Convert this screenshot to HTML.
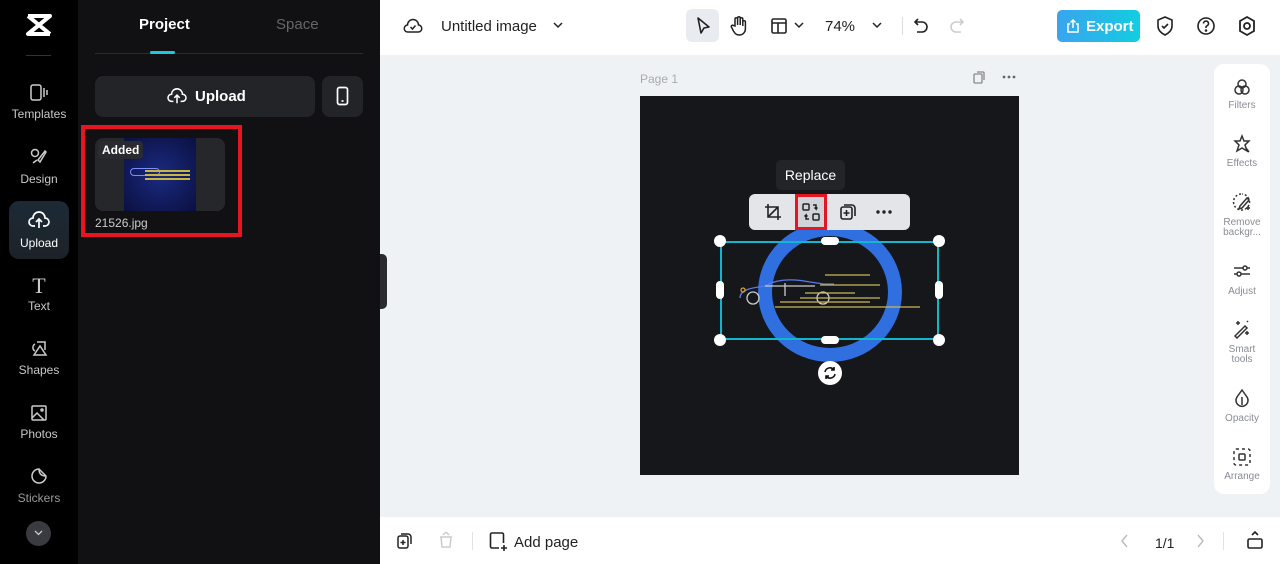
<!DOCTYPE html><html><head><style>
*{margin:0;padding:0;box-sizing:border-box}
body{width:1280px;height:564px;overflow:hidden;font-family:"Liberation Sans",sans-serif;position:relative;background:#eff2f5}
.a{position:absolute}
.nav{color:#c8c8cc;font-size:12px;text-align:center;width:78px;left:0}
svg{display:block}
.rp{color:#888c94;font-size:10px;text-align:center;width:56px;left:1214px;line-height:10px}
</style></head><body>
<div class="a" style="left:0;top:0;width:78px;height:564px;background:#000"></div>
<div class="a" style="left:78px;top:0;width:302px;height:564px;background:#111113"></div>
<svg class="a" style="left:25px;top:13px" width="28" height="24" viewBox="0 0 28 24"><path d="M3 3h22L3 21h22" fill="none" stroke="#fff" stroke-width="4" stroke-linejoin="round"/><path d="M3 3l22 18M25 3L3 21" stroke="#fff" stroke-width="4"/></svg>
<div class="a" style="left:26px;top:55px;width:25px;height:1px;background:#333"></div>
<svg class="a" style="left:29px;top:83px" width="20" height="20" viewBox="0 0 20 20" fill="none" stroke="#ccc" stroke-width="1.5"><rect x="2" y="2" width="10" height="15" rx="2"/><path d="M15 5v9M18 7v5"/></svg>
<div class="a nav" style="top:107px">Templates</div>
<svg class="a" style="left:29px;top:147px" width="20" height="20" viewBox="0 0 20 20" fill="none" stroke="#ccc" stroke-width="1.5"><circle cx="6" cy="6" r="3.5"/><path d="M9 13l7-9 1 1-6 10zM4 16l4-3"/></svg>
<div class="a nav" style="top:172px">Design</div>
<div class="a" style="left:9px;top:201px;width:60px;height:58px;border-radius:10px;background:linear-gradient(#1c2a36,#1d2228)"></div>
<svg class="a" style="left:28px;top:210px" width="22" height="20" viewBox="0 0 22 20" fill="none" stroke="#fff" stroke-width="1.7"><path d="M7 16H5a4 4 0 0 1 0-8 6 6 0 0 1 12 0 4 4 0 0 1 0 8h-2M11 18v-8M8 12l3-3 3 3"/></svg>
<div class="a nav" style="top:236px;color:#fff">Upload</div>
<div class="a nav" style="top:273px;font-size:22px;font-family:'Liberation Serif',serif;color:#ccc">T</div>
<div class="a nav" style="top:299px">Text</div>
<svg class="a" style="left:29px;top:339px" width="20" height="20" viewBox="0 0 20 20" fill="none" stroke="#ccc" stroke-width="1.5"><path d="M6 5a4 4 0 0 0 0 7M8 3h8v8M5 16l6-9 6 9z"/></svg>
<div class="a nav" style="top:363px">Shapes</div>
<svg class="a" style="left:29px;top:403px" width="20" height="20" viewBox="0 0 20 20" fill="none" stroke="#ccc" stroke-width="1.5"><rect x="3" y="3" width="14" height="14" rx="1"/><path d="M3 15l5-5 7 7"/><circle cx="13" cy="7" r="1"/></svg>
<div class="a nav" style="top:427px">Photos</div>
<svg class="a" style="left:29px;top:466px" width="20" height="20" viewBox="0 0 20 20" fill="none" stroke="#ccc" stroke-width="1.5"><path d="M17 10A7 7 0 1 1 10 3l7 7zM10 3q0 7 7 7"/></svg>
<div class="a nav" style="top:491px;color:#999">Stickers</div>
<div class="a" style="left:26px;top:521px;width:25px;height:25px;border-radius:50%;background:#3a3b40"></div>
<svg class="a" style="left:34px;top:530px" width="9" height="6" viewBox="0 0 9 6" fill="none" stroke="#ccc" stroke-width="1.3"><path d="M1 1l3.5 3.5L8 1"/></svg>
<div class="a" style="left:139px;top:16px;color:#fff;font-size:15px;font-weight:bold">Project</div>
<div class="a" style="left:276px;top:16px;color:#666;font-size:15px">Space</div>
<div class="a" style="left:95px;top:53px;width:268px;height:1px;background:#2a2b2e"></div>
<div class="a" style="left:150px;top:51px;width:25px;height:3px;border-radius:2px;background:#1ec8dc"></div>
<div class="a" style="left:95px;top:76px;width:220px;height:41px;border-radius:8px;background:#232427"></div>
<svg class="a" style="left:167px;top:87px" width="20" height="18" viewBox="0 0 22 20" fill="none" stroke="#fff" stroke-width="1.7"><path d="M7 16H5a4 4 0 0 1 0-8 6 6 0 0 1 12 0 4 4 0 0 1 0 8h-2M11 18v-8M8 12l3-3 3 3"/></svg>
<div class="a" style="left:195px;top:88px;color:#fff;font-size:15px;font-weight:bold">Upload</div>
<div class="a" style="left:322px;top:76px;width:41px;height:41px;border-radius:8px;background:#232427"></div>
<svg class="a" style="left:336px;top:86px" width="13" height="20" viewBox="0 0 13 20" fill="none" stroke="#fff" stroke-width="1.7"><rect x="1.5" y="1.5" width="10" height="17" rx="2"/><path d="M5.5 15h2"/></svg>
<div class="a" style="left:81px;top:125px;width:161px;height:112px;border:4px solid #e5161f"></div>
<div class="a" style="left:95px;top:138px;width:130px;height:73px;border-radius:8px;background:#26272b;overflow:hidden">
<div class="a" style="left:29px;top:0;width:72px;height:73px;background:radial-gradient(#1a2a80,#0b1040)"></div>
<div class="a" style="left:35px;top:30px;width:30px;height:8px;border-radius:6px;border:1px solid #7a8cff"></div>
<div class="a" style="left:50px;top:32px;width:45px;height:2px;background:#c9b640;box-shadow:0 4px 0 #c9b640,0 8px 0 #c9b640"></div>
<div class="a" style="left:3px;top:3px;padding:2px 4px;border-radius:4px;background:#2a2b30;color:#fff;font-size:12px;font-weight:bold">Added</div></div>
<div class="a" style="left:95px;top:216px;color:#ccc;font-size:12px">21526.jpg</div>
<div class="a" style="left:380px;top:254px;width:7px;height:55px;background:#2a2b2e;border-radius:0 5px 5px 0"></div>
<div class="a" style="left:380px;top:0;width:900px;height:55px;background:#fff"></div>
<svg class="a" style="left:403px;top:16px" width="20" height="20" viewBox="0 0 20 20" fill="none" stroke="#222" stroke-width="1.5"><path d="M6 16H5a3.5 3.5 0 0 1-.5-7 5.5 5.5 0 0 1 11 0 3.5 3.5 0 0 1-.5 7H6z"/><path d="M7.5 11l2 2 3-3.5"/></svg>
<div class="a" style="left:441px;top:18px;font-size:15px;color:#222">Untitled image</div>
<svg class="a" style="left:553px;top:22px" width="10" height="7" viewBox="0 0 10 7" fill="none" stroke="#222" stroke-width="1.5"><path d="M1 1l4 4 4-4"/></svg>
<div class="a" style="left:686px;top:9px;width:33px;height:33px;border-radius:6px;background:#e8ebef"></div>
<svg class="a" style="left:694px;top:16px" width="18" height="20" viewBox="0 0 18 20" fill="none" stroke="#222" stroke-width="1.6" stroke-linejoin="round"><path d="M4 2l11 9-5 1-3 5z"/></svg>
<svg class="a" style="left:729px;top:15px" width="20" height="22" viewBox="0 0 20 22" fill="none" stroke="#222" stroke-width="1.5"><path d="M6 11V4a1.3 1.3 0 0 1 2.6 0v6V3a1.3 1.3 0 0 1 2.6 0v7V4a1.3 1.3 0 0 1 2.6 0v7V7a1.3 1.3 0 0 1 2.6 0v7a6 6 0 0 1-6 6c-3 0-4-1-6-4l-2-4a1.3 1.3 0 0 1 2-1.5z"/></svg>
<svg class="a" style="left:770px;top:17px" width="18" height="18" viewBox="0 0 18 18" fill="none" stroke="#222" stroke-width="1.6"><rect x="2" y="2" width="14" height="14" rx="1.5"/><path d="M2 6h14M8 6v10"/></svg>
<svg class="a" style="left:794px;top:22px" width="10" height="7" viewBox="0 0 10 7" fill="none" stroke="#222" stroke-width="1.5"><path d="M1 1l4 4 4-4"/></svg>
<div class="a" style="left:825px;top:18px;font-size:15px;color:#222">74%</div>
<svg class="a" style="left:872px;top:22px" width="10" height="7" viewBox="0 0 10 7" fill="none" stroke="#222" stroke-width="1.5"><path d="M1 1l4 4 4-4"/></svg>
<div class="a" style="left:902px;top:17px;width:1px;height:18px;background:#ddd"></div>
<svg class="a" style="left:912px;top:16px" width="18" height="20" viewBox="0 0 18 20" fill="none" stroke="#222" stroke-width="1.6"><path d="M6 3L3 6l3 3M3 6h7a5 5 0 0 1 0 10H5"/></svg>
<svg class="a" style="left:948px;top:16px" width="18" height="20" viewBox="0 0 18 20" fill="none" stroke="#ccc" stroke-width="1.6"><path d="M12 3l3 3-3 3M15 6H8a5 5 0 0 0 0 10h5"/></svg>
<div class="a" style="left:1057px;top:10px;width:83px;height:32px;border-radius:5px;background:linear-gradient(90deg,#3aa4f0,#12cde0)"></div>
<svg class="a" style="left:1066px;top:18px" width="14" height="16" viewBox="0 0 14 16" fill="none" stroke="#fff" stroke-width="1.5"><path d="M4 6H2v8h10V6h-2M7 10V2M4.5 4.5L7 2l2.5 2.5"/></svg>
<div class="a" style="left:1086px;top:18px;color:#fff;font-size:15px;font-weight:bold">Export</div>
<svg class="a" style="left:1155px;top:15px" width="20" height="22" viewBox="0 0 20 22" fill="none" stroke="#222" stroke-width="1.6"><path d="M10 2l7 3v6c0 4-3 7-7 9-4-2-7-5-7-9V5z"/><path d="M7 11l2 2 4-4"/></svg>
<svg class="a" style="left:1196px;top:16px" width="20" height="20" viewBox="0 0 20 20" fill="none" stroke="#222" stroke-width="1.6"><circle cx="10" cy="10" r="8"/><path d="M7.5 7.5a2.5 2.5 0 1 1 3.5 2.3c-.7.3-1 .8-1 1.5v.7"/><circle cx="10" cy="14.5" r=".5" fill="#222"/></svg>
<svg class="a" style="left:1237px;top:15px" width="20" height="22" viewBox="0 0 20 22" fill="none" stroke="#222" stroke-width="1.8"><path d="M10 2l7 4v10l-7 4-7-4V6z"/><circle cx="10" cy="11" r="3"/></svg>
<div class="a" style="left:640px;top:72px;font-size:12px;color:#aaa">Page 1</div>
<svg class="a" style="left:972px;top:70px" width="14" height="14" viewBox="0 0 14 14" fill="none" stroke="#888" stroke-width="1.3"><rect x="2" y="4" width="8" height="9" rx="1"/><path d="M5 2h6a1 1 0 0 1 1 1v7"/></svg>
<svg class="a" style="left:1002px;top:75px" width="14" height="4" viewBox="0 0 14 4" fill="#666"><circle cx="2" cy="2" r="1.4"/><circle cx="7" cy="2" r="1.4"/><circle cx="12" cy="2" r="1.4"/></svg>
<div class="a" style="left:640px;top:96px;width:379px;height:379px;background:#16171b"></div>
<div class="a" style="left:758px;top:222px;width:144px;height:140px;border-radius:50%;border:14px solid #2f6fe0"></div>
<svg class="a" style="left:735px;top:268px" width="190" height="45" viewBox="0 0 190 45" fill="none" stroke-width="1.3"><path d="M5 30c0-8 10-10 25-12 10-6 25-8 45-4l14 2h10" stroke="#5a7ae8"/><path d="M30 18h50M50 15v13" stroke="#ccc"/><circle cx="18" cy="30" r="6" stroke="#ccc"/><circle cx="88" cy="30" r="6" stroke="#ccc"/><path d="M90 7h45M85 17h60M65 30h80M45 34h90M40 39h145M70 25h50" stroke="#c9b85a"/><circle cx="8" cy="22" r="2" stroke="#d9a030"/></svg>
<div class="a" style="left:720px;top:241px;width:219px;height:99px;border:2px solid #11b7cc"></div>
<div class="a" style="left:714px;top:235px;width:12px;height:12px;border-radius:50%;background:#fff"></div>
<div class="a" style="left:933px;top:235px;width:12px;height:12px;border-radius:50%;background:#fff"></div>
<div class="a" style="left:714px;top:334px;width:12px;height:12px;border-radius:50%;background:#fff"></div>
<div class="a" style="left:933px;top:334px;width:12px;height:12px;border-radius:50%;background:#fff"></div>
<div class="a" style="left:821px;top:237px;width:18px;height:8px;border-radius:4px;background:#fff"></div>
<div class="a" style="left:821px;top:336px;width:18px;height:8px;border-radius:4px;background:#fff"></div>
<div class="a" style="left:716px;top:281px;width:8px;height:18px;border-radius:4px;background:#fff"></div>
<div class="a" style="left:935px;top:281px;width:8px;height:18px;border-radius:4px;background:#fff"></div>
<div class="a" style="left:818px;top:361px;width:24px;height:24px;border-radius:50%;background:#fff"></div>
<svg class="a" style="left:823px;top:366px" width="14" height="14" viewBox="0 0 14 14" fill="none" stroke="#111" stroke-width="1.6"><path d="M2 6a5 5 0 0 1 9-2M12 8a5 5 0 0 1-9 2M11 1v3H8M3 13v-3h3"/></svg>
<div class="a" style="left:776px;top:160px;width:69px;height:30px;border-radius:5px;background:#222428;color:#fff;font-size:14px;text-align:center;line-height:30px">Replace</div>
<div class="a" style="left:749px;top:194px;width:161px;height:36px;border-radius:6px;background:#e4e5e8"></div>
<svg class="a" style="left:764px;top:203px" width="18" height="18" viewBox="0 0 18 18" fill="none" stroke="#222" stroke-width="1.6"><path d="M4 1v13h13M1 4h13v13M4 14L14 4"/></svg>
<div class="a" style="left:795px;top:194px;width:32px;height:36px;border:3px solid #e5161f;background:#d0d4da"></div>
<svg class="a" style="left:801px;top:202px" width="20" height="20" viewBox="0 0 20 20" fill="none" stroke="#222" stroke-width="1.5"><rect x="2" y="2" width="6" height="6" rx="1"/><rect x="12" y="12" width="6" height="6" rx="1"/><path d="M12 3h3v4l-1.5-1.5M15 7l1.5-1.5M8 17H5v-4l-1.5 1.5M5 13l1.5 1.5"/></svg>
<svg class="a" style="left:839px;top:203px" width="18" height="18" viewBox="0 0 18 18" fill="none" stroke="#222" stroke-width="1.6"><rect x="2" y="4" width="11" height="12" rx="2"/><path d="M5 2h8a3 3 0 0 1 3 3v8M7.5 7v6M4.5 10h6"/></svg>
<svg class="a" style="left:876px;top:210px" width="16" height="4" viewBox="0 0 16 4" fill="#222"><circle cx="2" cy="2" r="1.7"/><circle cx="8" cy="2" r="1.7"/><circle cx="14" cy="2" r="1.7"/></svg>
<div class="a" style="left:1214px;top:64px;width:56px;height:430px;border-radius:10px;background:#fff"></div>
<svg class="a" style="left:1232px;top:77px" width="20" height="20" viewBox="0 0 20 20" fill="none" stroke="#333" stroke-width="1.5"><circle cx="10" cy="7" r="4"/><circle cx="7" cy="13" r="4"/><circle cx="13" cy="13" r="4"/></svg>
<div class="a rp" style="top:101px">Filters</div>
<svg class="a" style="left:1232px;top:134px" width="20" height="20" viewBox="0 0 20 20" fill="none" stroke="#333" stroke-width="1.5"><path d="M10 2l2 5h5l-4 4 2 6-5-3-5 3 2-6-4-4h5zM14 14l3 4"/></svg>
<div class="a rp" style="top:159px">Effects</div>
<svg class="a" style="left:1232px;top:192px" width="20" height="20" viewBox="0 0 20 20" fill="none" stroke="#333" stroke-width="1.5"><path d="M9 2a8 8 0 1 0 1 0" stroke-dasharray="2 2"/><path d="M8 14l7-8 2 2-7 8-3 1zM16 14v4M14 16h4"/></svg>
<div class="a rp" style="top:218px">Remove<br>backgr...</div>
<svg class="a" style="left:1232px;top:261px" width="20" height="20" viewBox="0 0 20 20" fill="none" stroke="#333" stroke-width="1.5"><path d="M2 7h9M15 7h3M2 13h3M9 13h9"/><circle cx="13" cy="7" r="2"/><circle cx="7" cy="13" r="2"/></svg>
<div class="a rp" style="top:287px">Adjust</div>
<svg class="a" style="left:1232px;top:319px" width="20" height="20" viewBox="0 0 20 20" fill="none" stroke="#333" stroke-width="1.5"><path d="M3 17L13 7l2 2L5 19zM6 2v4M4 4h4M15 12v4M13 14h4M15 2l1 1"/></svg>
<div class="a rp" style="top:345px">Smart<br>tools</div>
<svg class="a" style="left:1232px;top:388px" width="20" height="20" viewBox="0 0 20 20" fill="none" stroke="#333" stroke-width="1.5"><path d="M10 2l5 7a6 6 0 1 1-10 0z"/><path d="M10 9v8"/></svg>
<div class="a rp" style="top:414px">Opacity</div>
<svg class="a" style="left:1232px;top:447px" width="20" height="20" viewBox="0 0 20 20" fill="none" stroke="#333" stroke-width="1.5"><rect x="2" y="2" width="16" height="16" rx="2" stroke-dasharray="3 3"/><rect x="7" y="7" width="6" height="6" rx="1"/></svg>
<div class="a rp" style="top:472px">Arrange</div>
<div class="a" style="left:380px;top:517px;width:900px;height:47px;background:#fff"></div>
<svg class="a" style="left:396px;top:532px" width="18" height="18" viewBox="0 0 18 18" fill="none" stroke="#222" stroke-width="1.5"><rect x="2" y="4" width="10" height="12" rx="2"/><path d="M5 2h7a3 3 0 0 1 3 3v7M7 8v5M4.5 10.5h5"/></svg>
<svg class="a" style="left:437px;top:531px" width="18" height="18" viewBox="0 0 18 18" fill="none" stroke="#ccc" stroke-width="1.5"><path d="M3 6h12M4 6l1 10h8l1-10M9 1l-3 3M9 1l3 3"/></svg>
<div class="a" style="left:472px;top:532px;width:1px;height:18px;background:#e2e2e2"></div>
<svg class="a" style="left:488px;top:531px" width="20" height="20" viewBox="0 0 20 20" fill="none" stroke="#222" stroke-width="1.6"><path d="M11 17H4a1.5 1.5 0 0 1-1.5-1.5v-12A1.5 1.5 0 0 1 4 2h10a1.5 1.5 0 0 1 1.5 1.5V12M16 14v6M13 17h6"/></svg>
<div class="a" style="left:514px;top:534px;font-size:15px;color:#222">Add page</div>
<svg class="a" style="left:1121px;top:534px" width="7" height="14" viewBox="0 0 7 14" fill="none" stroke="#bbb" stroke-width="1.4"><path d="M6 1L1 7l5 6"/></svg>
<div class="a" style="left:1155px;top:535px;font-size:14px;color:#222">1/1</div>
<svg class="a" style="left:1197px;top:534px" width="7" height="14" viewBox="0 0 7 14" fill="none" stroke="#bbb" stroke-width="1.4"><path d="M1 1l5 6-5 6"/></svg>
<div class="a" style="left:1223px;top:532px;width:1px;height:18px;background:#e2e2e2"></div>
<svg class="a" style="left:1246px;top:530px" width="18" height="20" viewBox="0 0 18 20" fill="none" stroke="#222" stroke-width="1.6"><rect x="2" y="9" width="14" height="9" rx="1.5"/><path d="M6 5l3-3 3 3"/></svg>
</body></html>
